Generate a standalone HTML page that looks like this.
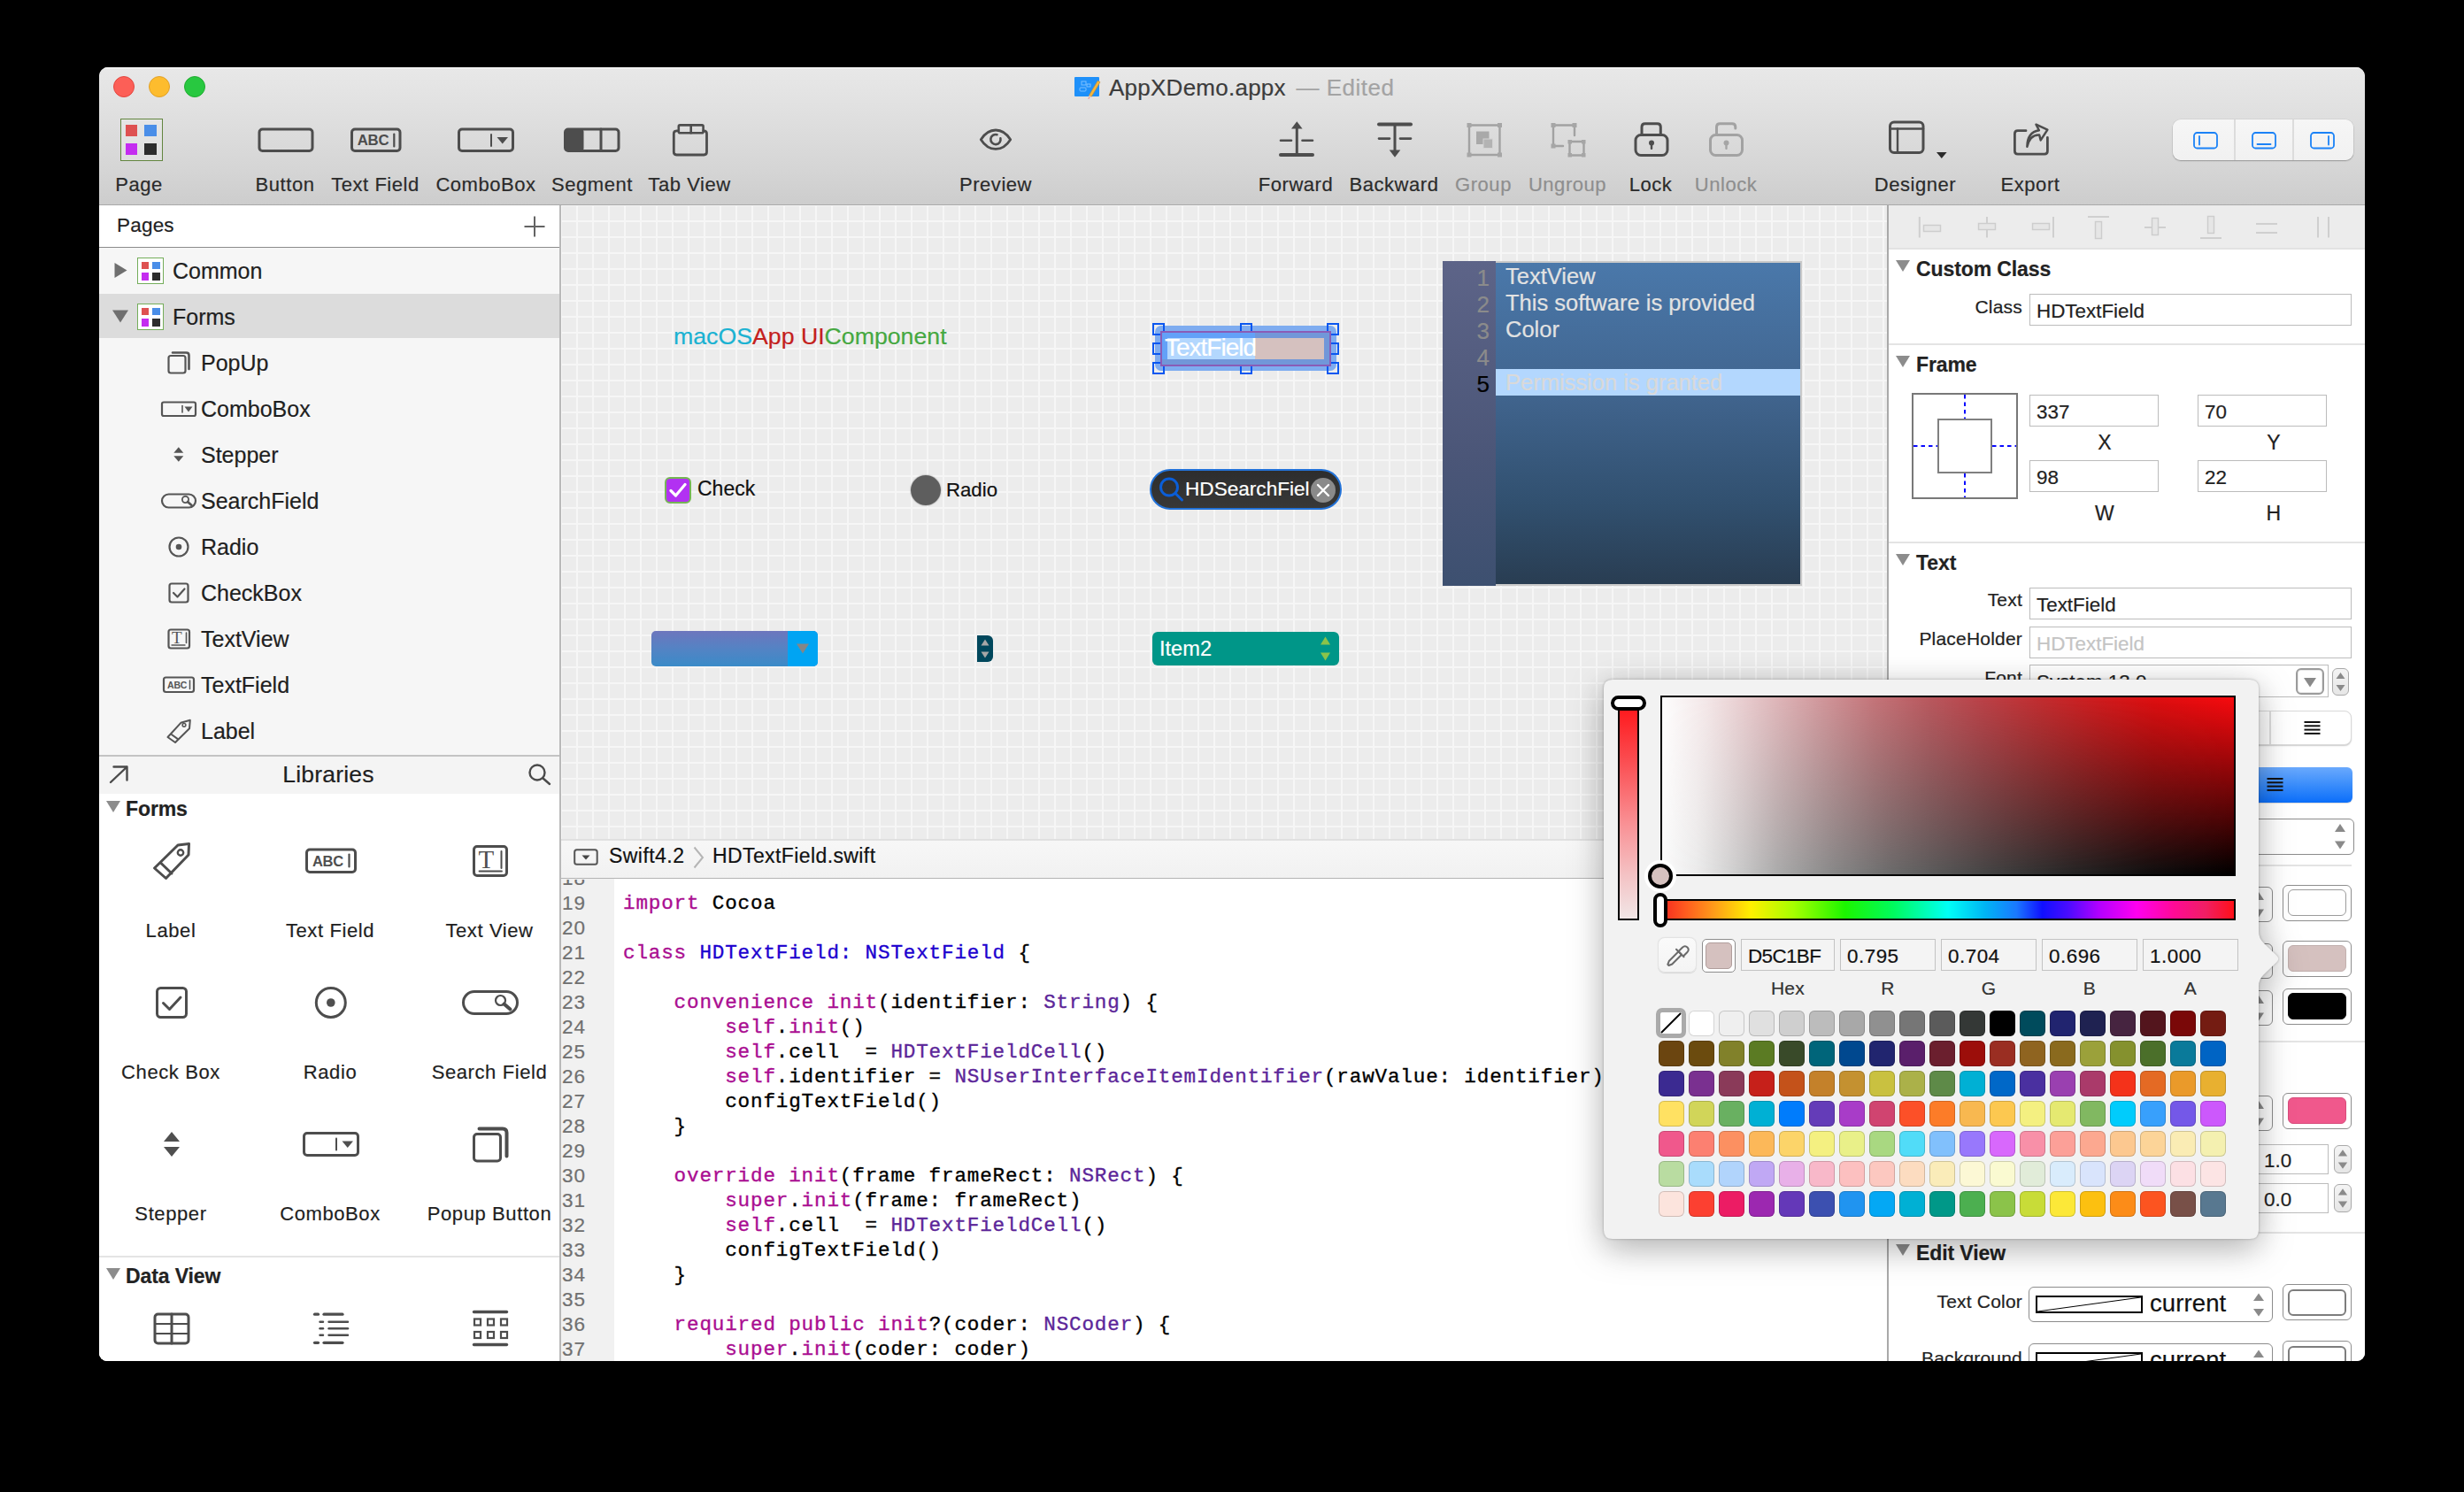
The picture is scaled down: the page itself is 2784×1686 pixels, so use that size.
<!DOCTYPE html>
<html><head><meta charset="utf-8"><title>AppXDemo</title>
<style>
html,body{margin:0;padding:0;background:#000;}
body{width:2784px;height:1686px;position:relative;overflow:hidden;font-family:"Liberation Sans",sans-serif;color:#222;}
*{box-sizing:border-box;}
#win{position:absolute;left:112px;top:76px;width:2560px;height:1462px;border-radius:10px 10px 9px 9px;overflow:hidden;background:#fff;}
#pg{position:absolute;left:-112px;top:-76px;width:2784px;height:1686px;}
.a{position:absolute;}
.t{position:absolute;white-space:nowrap;line-height:1;-webkit-text-stroke:0.200px;}
svg{position:absolute;overflow:visible;}
/* toolbar */
#tb{left:112px;top:76px;width:2560px;height:156px;background:linear-gradient(#e8e8e8 0%,#e2e2e2 25%,#d5d5d5 75%,#cdcdcd 100%);border-bottom:1.5px solid #a9a9a9;box-shadow:inset 0 1.500px 0 #f3f3f3;}
.tl{font-size:22px;color:#2b2b2b;transform:translateX(-50%);top:198px;letter-spacing:0.550px;}
.tl.d{color:#8e8e8e;}
.ic{stroke:#4d4d4d;fill:none;stroke-width:3;stroke-linecap:round;stroke-linejoin:round;}
.icd{stroke:#a2a2a2;fill:none;stroke-width:3;stroke-linecap:round;stroke-linejoin:round;}
/* sidebar */
#sb{left:112px;top:232px;width:520px;height:1306px;background:#f6f6f6;}
#sbr{left:632px;top:232px;width:2px;height:1306px;background:#b9b9b9;}
.row{font-size:25px;color:#1f1f1f;letter-spacing:0px;}
.pgi{width:30px;height:30px;border:1.5px solid #74ad5a;background:#fff;}
.pgi i{position:absolute;width:8.500px;height:8.500px;}
.lib{font-size:22px;color:#1f1f1f;transform:translateX(-50%);letter-spacing:0.6px;}
.sic{stroke:#555;fill:none;stroke-width:2.2;stroke-linecap:round;stroke-linejoin:round;}
.hdr{font-size:23px;font-weight:bold;color:#222;letter-spacing:-0.1px;}
/* canvas */
#cv{left:634px;top:232px;width:1499px;height:716px;background-color:#ececec;
background-image:linear-gradient(#f6f6f6 2px,transparent 2px),linear-gradient(90deg,#f6f6f6 2px,transparent 2px);background-size:18px 18px;background-position:-1px 17px;}
/* editor */
#edh{left:634px;top:948px;width:1499px;height:45px;background:linear-gradient(#f7f7f7,#f1f1f1);border-top:2px solid #e0e0e0;border-bottom:1.500px solid #b4b4b4;}
#ed{left:634px;top:993px;width:1499px;height:545px;background:#fff;}
#gut{left:634px;top:993px;width:60px;height:545px;background:#f1f1f1;}
.ln{font-size:22.500px;color:#707070;letter-spacing:1px;}
.cl{font-family:"Liberation Mono",monospace;font-size:22.600px;letter-spacing:0.840px;color:#000;white-space:pre;-webkit-text-stroke:0.350px;}
.k{color:#aa0d91;}.b{color:#1c00cf;}.p{color:#5c2699;}
/* inspector */
#insl{left:2132px;top:232px;width:2px;height:1306px;background:#a9a9a9;}
#ins{left:2134px;top:232px;width:538px;height:1306px;background:#fff;}
#insb{left:2134px;top:232px;width:538px;height:49px;background:#ececec;}
.fl{font-size:21px;color:#222;letter-spacing:0.2px;}
.fld{border:1.500px solid #bcbcbc;background:#fff;}
.fv{font-size:22.400px;color:#222;letter-spacing:0px;}
.dv{height:2px;background:#e4e4e4;}
.tri{width:0;height:0;border-left:8px solid transparent;border-right:8px solid transparent;border-top:13.500px solid #8c8c8c;}
.well{border:1.5px solid #8e8e8e;border-radius:6px;background:#fff;}
.welli{border:1.5px solid #9a9a9a;border-radius:6px;}
</style></head><body>
<div id="win"><div id="pg">
<div class="a" id="tb"></div>
<div class="a" id="sb"></div>
<div class="a" id="cv"></div>
<div class="a" id="edh"></div>
<div class="a" id="ed"></div>
<div class="a" id="gut"></div>
<div class="a" id="ins"></div>
<div class="a" id="insb"></div>
<div class="a" id="sbr"></div>
<div class="a" id="insl"></div>
<!-- traffic lights -->
<div class="a" style="left:128px;top:86px;width:24px;height:24px;border-radius:50%;background:#fc5f57;border:1px solid #e2463f;"></div>
<div class="a" style="left:168px;top:86px;width:24px;height:24px;border-radius:50%;background:#fdbc2e;border:1px solid #e0a028;"></div>
<div class="a" style="left:208px;top:86px;width:24px;height:24px;border-radius:50%;background:#28c840;border:1px solid #1fab2f;"></div>
<!-- title -->
<div class="a" style="left:1214px;top:87px;width:28px;height:22px;background:#1e90f9;border-radius:1px;"></div>
<svg style="left:1214px;top:84px" width="32" height="28" viewBox="0 0 32 28"><path d="M26.300 7.200 L29 8.800 L19.200 25.300 L16.500 23.700 Z" fill="#f6b73c" stroke="#c98a2a" stroke-width="0.6"/><path d="M16.500 23.700 L19.200 25.300 L15.600 28 Z" fill="#f3c9b0"/><path d="M16 26.200 L17 26.800 L15.600 28 Z" fill="#e05a6a"/><rect x="8" y="8" width="5" height="4" fill="none" stroke="#7cc0ff" stroke-width="1"/><rect x="6" y="15" width="7" height="4" rx="1" fill="none" stroke="#7cc0ff" stroke-width="1"/><rect x="14" y="11" width="4" height="3" fill="none" stroke="#7cc0ff" stroke-width="1"/></svg>
<div class="t" style="left:1253px;top:86px;font-size:26px;color:#3c3c3c;letter-spacing:0.25px;">AppXDemo.appx<span style="color:#a3a3a3;letter-spacing:0.5px;margin-left:4px;"> — Edited</span></div>
<!-- labels -->
<div class="t tl" style="left:157px;">Page</div>
<div class="t tl" style="left:322px;">Button</div>
<div class="t tl" style="left:424px;">Text Field</div>
<div class="t tl" style="left:549px;">ComboBox</div>
<div class="t tl" style="left:669px;">Segment</div>
<div class="t tl" style="left:779px;">Tab View</div>
<div class="t tl" style="left:1125px;">Preview</div>
<div class="t tl" style="left:1464px;">Forward</div>
<div class="t tl" style="left:1575px;">Backward</div>
<div class="t tl d" style="left:1676px;">Group</div>
<div class="t tl d" style="left:1771px;">Ungroup</div>
<div class="t tl" style="left:1865px;">Lock</div>
<div class="t tl d" style="left:1950px;">Unlock</div>
<div class="t tl" style="left:2164px;">Designer</div>
<div class="t tl" style="left:2294px;">Export</div>
<!-- page icon -->
<div class="a" style="left:136px;top:134px;width:48px;height:48px;border:1.5px solid #62853f;background:rgba(255,255,255,0.22);"></div>
<div class="a" style="left:142px;top:141px;width:13px;height:13px;background:#de5151;"></div>
<div class="a" style="left:163px;top:141px;width:14px;height:13px;background:#4a8ee8;"></div>
<div class="a" style="left:142px;top:162px;width:13px;height:13px;background:#c42df0;"></div>
<div class="a" style="left:163px;top:162px;width:14px;height:13px;background:#2d2d2d;"></div>
<!-- icons -->
<svg style="left:0;top:0" width="2784" height="240" viewBox="0 0 2784 240">
<g class="ic">
<rect x="293" y="146" width="60" height="24.5" rx="3.500"/>
<rect x="397.5" y="146" width="54.5" height="24.5" rx="3.500"/>
<line x1="445.300" y1="151.500" x2="445.300" y2="165.500" stroke-width="2.200"/>
<rect x="518.5" y="146" width="61" height="24.5" rx="3.500"/>
<line x1="555" y1="152" x2="555" y2="165" stroke-width="2"/>
<rect x="638.5" y="146" width="60.5" height="24.5" rx="3.500"/>
<line x1="679" y1="146" x2="679" y2="170"/>
<path d="M766.500 147.800 H764.500 Q761.300 147.800 761.300 151 V171.800 Q761.300 175 764.500 175 H795.300 Q798.500 175 798.500 171.800 V151 Q798.500 147.800 795.300 147.800 H794.800" stroke-width="2.800"/>
<rect x="766.800" y="141.400" width="27.800" height="8.900" rx="1.500" stroke-width="2.600"/><line x1="780.700" y1="141.400" x2="780.700" y2="150.300" stroke-width="2.600"/>
<!-- preview eye -->
<path d="M1108.300 157.700 C1113.500 149.500 1119.500 147 1125 147 C1130.500 147 1136.500 149.500 1141.700 157.700 C1136.500 165.900 1130.500 168.400 1125 168.400 C1119.500 168.400 1113.500 165.900 1108.300 157.700 Z" stroke-width="2.800"/>
<path d="M1126.500 152.200 A5.600 5.600 0 1 0 1130.400 156.300" stroke-width="2.600"/>
<!-- forward -->
<line x1="1465.300" y1="145" x2="1465.300" y2="174" />
<line x1="1447" y1="158.800" x2="1459" y2="158.800" stroke-width="2.6"/>
<line x1="1471.500" y1="158.800" x2="1483" y2="158.800" stroke-width="2.6"/>
<line x1="1447" y1="175" x2="1483" y2="175" stroke-width="4"/>
<!-- backward -->
<line x1="1576" y1="141" x2="1576" y2="170" />
<line x1="1558" y1="140.500" x2="1594" y2="140.500" stroke-width="4"/>
<line x1="1558" y1="156.600" x2="1570" y2="156.600" stroke-width="2.6"/>
<line x1="1582" y1="156.600" x2="1594" y2="156.600" stroke-width="2.6"/>
<!-- lock -->
<rect x="1848" y="152.500" width="36" height="23" rx="6"/>
<path d="M1855 152.500 V143.500 Q1855 139.800 1858.800 139.800 H1872.500 Q1876.300 139.800 1876.300 143.500 V152.500"/>
<!-- designer -->
<rect x="2135.500" y="138" width="37.500" height="34.500" rx="4.500"/>
<line x1="2135.500" y1="145.500" x2="2173" y2="145.500" stroke-width="2.4"/>
<line x1="2144" y1="145.500" x2="2144" y2="172.500" stroke-width="2.4"/>
<!-- export -->
<path d="M2289 147.700 H2279.800 Q2276.400 147.700 2276.400 151.100 V170.800 Q2276.400 174.200 2279.800 174.200 H2310 Q2313.400 174.200 2313.400 170.800 V155.500" stroke-width="2.800"/>
<path d="M2290.400 165.700 C2290.500 156 2294 148.800 2303.900 147.300 L2300.500 140.700 L2313.400 146.600 L2305.700 158.400 L2304.200 152.500 C2297 152 2292.500 157 2290.400 165.700 Z" stroke-width="2.500"/>
</g>
<g fill="#4d4d4d">
<rect x="638.500" y="146" width="21" height="24.500" rx="3"/>
<path d="M561.500 155 H574 L567.750 162.500 Z"/>
<path d="M1459 145.500 L1465.300 137.300 L1471.600 145.500 Z"/>
<path d="M1569.700 169.500 L1576 177.700 L1582.300 169.500 Z"/>
<circle cx="1866" cy="161.500" r="3"/><rect x="1864.800" y="161.500" width="2.400" height="7.500" rx="1"/>
<path d="M2188 172 H2199.600 L2193.800 179 Z" fill="#2b2b2b"/>
</g>
<text x="403.800" y="164.300" font-family="Liberation Sans" font-weight="bold" font-size="16.800" fill="#4d4d4d" letter-spacing="-0.3">ABC</text>
<g class="icd">
<!-- group -->
<rect x="1660" y="141.500" width="34.500" height="33.500" stroke-width="2.4"/>
<!-- ungroup -->
<path d="M1779 141.500 H1755 V165 H1766" stroke-width="2.4"/><path d="M1779 141.500 V153" stroke-width="2.4"/>
<rect x="1773.500" y="160" width="16" height="15.500" stroke-width="2.4" />
<!-- unlock -->
<rect x="1932.500" y="152.500" width="36" height="23" rx="6"/>
<path d="M1939.500 152.500 V143.500 Q1939.500 139.800 1943.300 139.800 H1957 Q1960.800 139.800 1960.800 143.500 V145"/>
</g>
<g fill="#a6a6a6">
<rect x="1657.500" y="139" width="5" height="5"/><rect x="1692" y="139" width="5" height="5"/><rect x="1657.500" y="172.500" width="5" height="5"/><rect x="1692" y="172.500" width="5" height="5"/>
<rect x="1668" y="148.500" width="14.500" height="14.500" fill="#a9a9a9"/><rect x="1676" y="157" width="10.500" height="10.500" fill="#b3b3b3" stroke="#d4d4d4" stroke-width="1"/>
<rect x="1752.500" y="139" width="5" height="5"/><rect x="1776.500" y="139" width="5" height="5"/><rect x="1752.500" y="162.500" width="5" height="5"/>
<rect x="1771.500" y="158" width="4.500" height="4.500"/><rect x="1787" y="158" width="4.500" height="4.500"/><rect x="1771.500" y="173" width="4.500" height="4.500"/><rect x="1787" y="173" width="4.500" height="4.500"/>
<circle cx="1950.500" cy="161.500" r="3"/><rect x="1949.300" y="161.500" width="2.400" height="7.500" rx="1"/>
</g>
</svg>
<!-- segmented -->
<div class="a" style="left:2455px;top:135px;width:204px;height:46px;border-radius:9px;background:linear-gradient(#f6f6f6,#f1f1f1);box-shadow:0 1px 1.5px rgba(0,0,0,0.28),0 0 0 0.5px rgba(0,0,0,0.08);"></div>
<div class="a" style="left:2524px;top:135px;width:2px;height:46px;background:#dcdcdc;"></div>
<div class="a" style="left:2590px;top:135px;width:2px;height:46px;background:#dcdcdc;"></div>
<svg style="left:0;top:0" width="2784" height="240" viewBox="0 0 2784 240"><g fill="none" stroke="#1a82f7" stroke-width="1.800" stroke-linecap="round">
<rect x="2479" y="150" width="26" height="17.500" rx="3.500"/><line x1="2485" y1="154" x2="2485" y2="163.500"/>
<rect x="2545" y="150" width="26" height="17.500" rx="3.500"/><line x1="2550.500" y1="163" x2="2565.500" y2="163"/>
<rect x="2611" y="150" width="26" height="17.500" rx="3.500"/><line x1="2631" y1="154" x2="2631" y2="163.500"/>
</g></svg>
<div class="a" style="left:112px;top:232px;width:520px;height:48px;background:#fff;border-bottom:1.5px solid #8b8b8b;"></div>
<div class="t" style="left:132px;top:244px;font-size:22.500px;color:#1f1f1f;letter-spacing:0.200px;">Pages</div>
<svg style="left:591px;top:243px" width="26" height="26" viewBox="0 0 26 26"><path d="M13 1.5V24.5M1.500 13H24.500" stroke="#636363" stroke-width="2" fill="none"/></svg>
<div class="a" style="left:112px;top:332px;width:520px;height:50px;background:#dcdcdc;"></div>
<div class="a pgi" style="left:155px;top:291px;"><i style="left:3.500px;top:3.500px;background:#de5151;"></i><i style="left:16px;top:3.500px;background:#4a8ee8;"></i><i style="left:3.500px;top:16px;background:#c42df0;"></i><i style="left:16px;top:16px;background:#2d2d2d;"></i></div>
<div class="a pgi" style="left:155px;top:343px;"><i style="left:3.500px;top:3.500px;background:#de5151;"></i><i style="left:16px;top:3.500px;background:#4a8ee8;"></i><i style="left:3.500px;top:16px;background:#c42df0;"></i><i style="left:16px;top:16px;background:#2d2d2d;"></i></div>
<svg style="left:0;top:0" width="700" height="900" viewBox="0 0 700 900"><path d="M129.500 297 L143.500 305.500 L129.500 314 Z" fill="#6f6f6f"/><path d="M127 350.500 H145 L136 364.500 Z" fill="#6f6f6f"/></svg>
<div class="t row" style="left:195px;top:294px;">Common</div>
<div class="t row" style="left:195px;top:346px;">Forms</div>
<div class="t row" style="left:227px;top:398px;">PopUp</div>
<div class="t row" style="left:227px;top:450px;">ComboBox</div>
<div class="t row" style="left:227px;top:502px;">Stepper</div>
<div class="t row" style="left:227px;top:554px;">SearchField</div>
<div class="t row" style="left:227px;top:606px;">Radio</div>
<div class="t row" style="left:227px;top:658px;">CheckBox</div>
<div class="t row" style="left:227px;top:710px;">TextView</div>
<div class="t row" style="left:227px;top:762px;">TextField</div>
<div class="t row" style="left:227px;top:814px;">Label</div>
<svg style="left:0;top:0" width="700" height="900" viewBox="0 0 700 900"><g class="sic">
<!-- popup -->
<rect x="190.500" y="402" width="19" height="19.500" rx="2.500"/><path d="M195 398.500 H210.500 Q213.500 398.500 213.500 401.500 V417" stroke-width="2.600"/>
<!-- combobox -->
<rect x="183" y="454.500" width="38" height="15.500" rx="2"/><line x1="206" y1="458.500" x2="206" y2="466" stroke-width="1.600"/>
<!-- searchfield -->
<rect x="183" y="558.500" width="38" height="15" rx="7.500"/><circle cx="209.500" cy="564.500" r="3.600" stroke-width="1.800"/><line x1="212" y1="567" x2="216.500" y2="571" stroke-width="2.600"/>
<!-- radio -->
<circle cx="202" cy="618" r="10.500"/>
<!-- checkbox -->
<rect x="191.500" y="659.500" width="21" height="21" rx="2.500"/><path d="M196 670 L200.500 674.500 L208.500 665.500" stroke-width="2.200"/>
<!-- textview -->
<rect x="190.500" y="711.500" width="23.500" height="21" rx="2.500"/><line x1="210.500" y1="715" x2="210.500" y2="726.500" stroke-width="1.600"/><line x1="194" y1="729" x2="209" y2="729" stroke-width="1.400"/>
<!-- textfield -->
<rect x="185" y="765.500" width="34" height="16.500" rx="2.500"/><line x1="214.500" y1="769" x2="214.500" y2="778.500" stroke-width="1.500"/>
<!-- label tag -->
<path d="M189.500 833 L204.300 816.800 L214.800 813.800 L214 823.300 L198 839 Z M192.800 829.300 L201.600 835.600" stroke-width="2"/><circle cx="208" cy="819.300" r="1.900" stroke-width="1.500"/>
</g>
<g fill="#555">
<path d="M208.500 459.500 H217.500 L213 465.500 Z"/>
<path d="M196.300 511.800 H207.300 L201.800 505.300 Z"/><path d="M196.300 515.300 H207.300 L201.800 521.800 Z"/>
<circle cx="202" cy="618" r="3.300"/>
</g>
<text x="194" y="727" font-family="Liberation Serif" font-size="19" fill="#555">T</text>
<text x="189" y="778" font-family="Liberation Sans" font-weight="bold" font-size="10.500" fill="#555" letter-spacing="-0.2">ABC</text>
</svg>
<div class="a" style="left:112px;top:853px;width:520px;height:2px;background:#c3c3c3;"></div>
<div class="a" style="left:112px;top:855px;width:520px;height:42px;background:#f4f4f4;"></div>
<div class="a" style="left:112px;top:897px;width:520px;height:641px;background:#fff;"></div>
<div class="t" style="left:371px;top:862px;font-size:26.5px;color:#1f1f1f;transform:translateX(-50%);letter-spacing:0.2px;">Libraries</div>
<svg style="left:0;top:0" width="700" height="1000" viewBox="0 0 700 1000"><g fill="none" stroke="#4a4a4a" stroke-width="2.400" stroke-linecap="round" stroke-linejoin="round"><path d="M125 884 L143.500 866.500 M128.500 866.500 H143.500 V881.500"/><circle cx="607" cy="873" r="8.500"/><line x1="613.500" y1="879.500" x2="621" y2="886"/></g></svg>
<div class="a tri" style="left:120px;top:905px;border-left-width:8.500px;border-right-width:8.500px;border-top-width:13px;"></div>
<div class="t hdr" style="left:142px;top:903px;">Forms</div>
<div class="t lib" style="left:193px;top:1041px;">Label</div>
<div class="t lib" style="left:373px;top:1041px;">Text Field</div>
<div class="t lib" style="left:553px;top:1041px;">Text View</div>
<div class="t lib" style="left:193px;top:1201px;">Check Box</div>
<div class="t lib" style="left:373px;top:1201px;">Radio</div>
<div class="t lib" style="left:553px;top:1201px;">Search Field</div>
<div class="t lib" style="left:193px;top:1361px;">Stepper</div>
<div class="t lib" style="left:373px;top:1361px;">ComboBox</div>
<div class="t lib" style="left:553px;top:1361px;">Popup Button</div>
<svg style="left:0;top:0" width="700" height="1600" viewBox="0 0 700 1600"><g class="ic" stroke="#4f4f4f" stroke-width="2.800">
<!-- label tag big -->
<path d="M174.500 981 L201 955 L213.500 953.500 L213 966 L187.500 992.500 Z M181 974.500 L194 987" />
<circle cx="204" cy="963.500" r="3.200" stroke-width="2.400"/>
<!-- text field big -->
<rect x="346.500" y="960" width="55" height="25.500" rx="3.500"/><line x1="394.500" y1="965.500" x2="394.500" y2="979.500" stroke-width="2.200"/>
<!-- text view big -->
<rect x="535.500" y="956.500" width="37" height="33" rx="3.500"/><line x1="566.500" y1="962" x2="566.500" y2="981" stroke-width="2"/><line x1="541.500" y1="984.500" x2="567" y2="984.500" stroke-width="1.800"/>
<!-- checkbox big -->
<rect x="177.500" y="1116.500" width="33" height="33" rx="4"/><path d="M184.500 1133.500 L191.500 1140.500 L204 1127" stroke-width="3"/>
<!-- radio big -->
<circle cx="373.800" cy="1133" r="16.500"/>
<!-- search big -->
<rect x="523.500" y="1120.500" width="61" height="25" rx="12.500"/><circle cx="565.500" cy="1130.500" r="5.500" stroke-width="2.200"/><line x1="569.500" y1="1134.500" x2="576.500" y2="1140.500" stroke-width="4"/>
<!-- combobox big -->
<rect x="343.500" y="1280.500" width="61" height="25" rx="3.500"/><line x1="380" y1="1286.500" x2="380" y2="1299.500" stroke-width="2"/>
<!-- popup big -->
<rect x="535.500" y="1281.500" width="30" height="30.500" rx="3.500"/><path d="M541.500 1275.500 H568 Q572.500 1275.500 572.500 1280 V1306.500" stroke-width="4"/>
</g>
<g fill="#4f4f4f">
<circle cx="373.800" cy="1133" r="4.800"/>
<path d="M185 1290 H203 L194 1279 Z"/><path d="M185 1296 H203 L194 1307 Z"/>
<path d="M386.500 1289.500 H399 L392.750 1297 Z"/>
</g>
<text x="353" y="979" font-family="Liberation Sans" font-weight="bold" font-size="16.500" fill="#4f4f4f" letter-spacing="-0.3">ABC</text>
<text x="540.500" y="981" font-family="Liberation Serif" font-size="29" fill="#4f4f4f">T</text>
</svg>
<div class="a dv" style="left:112px;top:1419px;width:520px;"></div>
<div class="a tri" style="left:120px;top:1433px;border-left-width:8.500px;border-right-width:8.500px;border-top-width:13px;"></div>
<div class="t hdr" style="left:142px;top:1431px;">Data View</div>
<svg style="left:0;top:0" width="700" height="1600" viewBox="0 0 700 1600"><g class="ic" stroke="#4f4f4f" stroke-width="2.800">
<rect x="175" y="1485" width="38" height="33" rx="3.500"/><line x1="194" y1="1485" x2="194" y2="1518"/><line x1="175" y1="1496" x2="213" y2="1496" stroke-width="2.200"/><line x1="175" y1="1507" x2="213" y2="1507" stroke-width="2.200"/>
<g stroke-width="3.200"><line x1="366" y1="1485.200" x2="387" y2="1485.200"/><line x1="355.500" y1="1485.200" x2="359.500" y2="1485.200"/>
<line x1="371.500" y1="1493.700" x2="393" y2="1493.700" stroke-width="2.400"/><line x1="361.500" y1="1493.700" x2="365" y2="1493.700" stroke-width="2.400"/>
<line x1="371.500" y1="1501.200" x2="393" y2="1501.200" stroke-width="2.400"/><line x1="361.500" y1="1501.200" x2="365" y2="1501.200" stroke-width="2.400"/>
<line x1="371.500" y1="1508.800" x2="393" y2="1508.800" stroke-width="2.400"/><line x1="361.500" y1="1508.800" x2="365" y2="1508.800" stroke-width="2.400"/>
<line x1="366" y1="1517.300" x2="387" y2="1517.300"/><line x1="355.500" y1="1517.300" x2="359.500" y2="1517.300"/></g>
<line x1="535.500" y1="1482.500" x2="572.500" y2="1482.500" stroke-width="3.400"/><line x1="535.500" y1="1519.500" x2="572.500" y2="1519.500" stroke-width="3.400"/>
<g stroke-width="2.200" stroke-linejoin="miter"><rect x="536" y="1490.500" width="7" height="7"/><rect x="551" y="1490.500" width="7" height="7"/><rect x="566" y="1490.500" width="7" height="7"/><rect x="536" y="1505" width="7" height="7"/><rect x="551" y="1505" width="7" height="7"/><rect x="566" y="1505" width="7" height="7"/></g>
</g></svg>
<!-- label -->
<div class="t" style="left:761px;top:367px;font-size:26.7px;letter-spacing:0px;"><span style="color:#1ab2d2;">macOS</span><span style="color:#c4201c;">App UI</span><span style="color:#45a841;">Component</span></div>
<!-- selected textfield -->
<div class="a" style="left:1305px;top:368px;width:205px;height:51px;border-radius:7px;background:#7eacf0;"></div>
<svg style="left:0;top:0" width="2784" height="500" viewBox="0 0 2784 500"><g fill="none" stroke="#0a57f0" stroke-width="2">
<rect x="1303" y="366" width="12" height="12"/><rect x="1402" y="366" width="12" height="12"/><rect x="1500" y="366" width="12" height="12"/>
<rect x="1303" y="388" width="12" height="12"/><rect x="1500" y="388" width="12" height="12"/>
<rect x="1303" y="410" width="12" height="12"/><rect x="1402" y="410" width="12" height="12"/><rect x="1500" y="410" width="12" height="12"/>
</g></svg>
<div class="a" style="left:1311px;top:374px;width:193px;height:40px;background:#7197d9;border:2px solid #8a5cb6;"></div>
<div class="a" style="left:1313px;top:376px;width:105px;height:6px;background:#63a1f8;"></div>
<div class="a" style="left:1313px;top:376px;width:6px;height:30px;background:#63a1f8;"></div>
<div class="a" style="left:1319px;top:382px;width:99px;height:24px;background:#b3d7fe;"></div>
<div class="a" style="left:1418px;top:382px;width:78px;height:24px;background:#d5c1bf;"></div>
<div class="t" style="left:1316px;top:379px;font-size:28px;color:#fff;letter-spacing:-1px;">TextField</div>
<!-- check -->
<div class="a" style="left:751px;top:539px;width:30px;height:30px;border-radius:6px;background:#b231f2;border:2px solid #76b655;"></div>
<svg style="left:751px;top:539px" width="30" height="30" viewBox="0 0 30 30"><path d="M7 15.500 L12.500 21 L23 8.500" fill="none" stroke="#fff" stroke-width="3.200" stroke-linecap="round" stroke-linejoin="round"/></svg>
<div class="t" style="left:788px;top:541px;font-size:23px;color:#111;letter-spacing:0px;">Check</div>
<!-- radio -->
<div class="a" style="left:1029px;top:537px;width:34px;height:34px;border-radius:50%;background:radial-gradient(circle,#5e5e5e 0%,#5e5e5e 82%,#7d7d7d 100%);box-shadow:0 0 1.5px #666;"></div>
<div class="t" style="left:1069px;top:543px;font-size:22.200px;color:#111;letter-spacing:0px;">Radio</div>
<!-- search field -->
<div class="a" style="left:1299px;top:530px;width:217px;height:46px;border-radius:23px;background:linear-gradient(#2d2d2d,#383838);border:2px solid #2272d8;"></div>
<svg style="left:1300px;top:530px" width="50" height="46" viewBox="0 0 50 46"><circle cx="21" cy="20.500" r="9.500" fill="none" stroke="#0b5ed7" stroke-width="3"/><line x1="28" y1="27.500" x2="35.500" y2="35" stroke="#0b5ed7" stroke-width="3" stroke-linecap="round"/></svg>
<div class="t" style="left:1339px;top:542px;font-size:22.600px;color:#fff;letter-spacing:0px;">HDSearchFiel</div>
<div class="a" style="left:1481px;top:540px;width:28px;height:28px;border-radius:50%;background:#8a8a8a;"></div>
<svg style="left:1481px;top:540px" width="28" height="28" viewBox="0 0 28 28"><path d="M8 8 L20 20 M20 8 L8 20" stroke="#fff" stroke-width="2.400" stroke-linecap="round"/></svg>
<!-- combobox -->
<div class="a" style="left:736px;top:713px;width:188px;height:40px;border-radius:5px;background:linear-gradient(#6d76bd,#5483c4 50%,#3a8bc8);overflow:hidden;"><div class="a" style="left:154px;top:0;width:34px;height:40px;background:#00a4f3;"></div></div>
<svg style="left:890px;top:713px" width="34" height="40" viewBox="0 0 34 40"><path d="M10 14.500 H24 L17 25.500 Z" fill="#858585"/></svg>
<!-- stepper -->
<div class="a" style="left:1104px;top:718px;width:18px;height:30px;border-radius:0 6px 6px 0;background:#00475c;"></div>
<svg style="left:1104px;top:718px" width="18" height="30" viewBox="0 0 18 30"><path d="M4.500 11.500 H13.500 L9 4.500 Z" fill="#a6a6a6"/><path d="M4.500 18.500 H13.500 L9 25.500 Z" fill="#a6a6a6"/></svg>
<!-- popup -->
<div class="a" style="left:1302px;top:714px;width:211px;height:38px;border-radius:6px;background:#009688;"></div>
<div class="t" style="left:1310px;top:722px;font-size:23.600px;color:#fff;">Item2</div>
<svg style="left:1485px;top:714px" width="26" height="38" viewBox="0 0 26 38"><path d="M7 14.500 H18 L12.500 5.500 Z" fill="#8bc34a"/><path d="M7 23.500 H18 L12.500 32.500 Z" fill="#8bc34a"/></svg>
<!-- textview -->
<div class="a" style="left:1630px;top:295px;width:406px;height:367px;background:linear-gradient(#4a78aa,#41658f 40%,#31506f 75%,#293d52);border:2px solid #c9c9c9;border-left:none;"></div>
<div class="a" style="left:1630px;top:295px;width:60px;height:367px;background:linear-gradient(#5d6488,#4b5678 60%,#3d5070);"></div>
<div class="a" style="left:1690px;top:417px;width:344px;height:30px;background:#b3d7fe;"></div>
<div class="t" style="left:1630px;width:53px;text-align:right;top:299px;font-size:26px;color:#8b8b8b;line-height:30px;white-space:pre;">1
2
3
4
<span style="color:#000;">5</span></div>
<div class="t" style="left:1701px;top:297px;font-size:25.500px;color:#e2e2e2;line-height:30px;white-space:pre;">TextView
This software is provided
Color

<span style="color:#d9d9d9;">Permission is granted</span></div>
<svg style="left:648px;top:959px" width="30" height="20" viewBox="0 0 30 20"><rect x="1.200" y="1.200" width="25.500" height="16.500" rx="2.500" fill="none" stroke="#555" stroke-width="2"/><path d="M9.500 7.500 H18.500 L14 12.500 Z" fill="#444"/></svg>
<div class="t" style="left:688px;top:956px;font-size:23px;color:#111;letter-spacing:0.45px;">Swift4.2</div>
<svg style="left:780px;top:955px" width="20" height="28" viewBox="0 0 20 28"><path d="M4.500 2.500 L14 14 L4.500 25.500" fill="none" stroke="#b5b5b5" stroke-width="2"/></svg>
<div class="t" style="left:805px;top:956px;font-size:23px;color:#111;letter-spacing:0.4px;">HDTextField.swift</div>
<div class="a" style="left:634px;top:994px;width:1499px;height:544px;overflow:hidden;">
<div class="t ln" style="left:1px;top:-12px;">18</div>
<div class="t ln" style="left:1px;top:16px;">19</div>
<div class="t cl" style="left:70px;top:16px;"><span class="k">import</span> Cocoa</div>
<div class="t ln" style="left:1px;top:44px;">20</div>
<div class="t ln" style="left:1px;top:72px;">21</div>
<div class="t cl" style="left:70px;top:72px;"><span class="k">class</span> <span class="b">HDTextField: NSTextField</span> {</div>
<div class="t ln" style="left:1px;top:100px;">22</div>
<div class="t ln" style="left:1px;top:128px;">23</div>
<div class="t cl" style="left:70px;top:128px;">    <span class="k">convenience</span> <span class="k">init</span>(identifier: <span class="p">String</span>) {</div>
<div class="t ln" style="left:1px;top:156px;">24</div>
<div class="t cl" style="left:70px;top:156px;">        <span class="k">self</span>.<span class="k">init</span>()</div>
<div class="t ln" style="left:1px;top:184px;">25</div>
<div class="t cl" style="left:70px;top:184px;">        <span class="k">self</span>.cell  = <span class="p">HDTextFieldCell</span>()</div>
<div class="t ln" style="left:1px;top:212px;">26</div>
<div class="t cl" style="left:70px;top:212px;">        <span class="k">self</span>.identifier = <span class="p">NSUserInterfaceItemIdentifier</span>(rawValue: identifier)</div>
<div class="t ln" style="left:1px;top:240px;">27</div>
<div class="t cl" style="left:70px;top:240px;">        configTextField()</div>
<div class="t ln" style="left:1px;top:268px;">28</div>
<div class="t cl" style="left:70px;top:268px;">    }</div>
<div class="t ln" style="left:1px;top:296px;">29</div>
<div class="t ln" style="left:1px;top:324px;">30</div>
<div class="t cl" style="left:70px;top:324px;">    <span class="k">override</span> <span class="k">init</span>(frame frameRect: <span class="p">NSRect</span>) {</div>
<div class="t ln" style="left:1px;top:352px;">31</div>
<div class="t cl" style="left:70px;top:352px;">        <span class="k">super</span>.<span class="k">init</span>(frame: frameRect)</div>
<div class="t ln" style="left:1px;top:380px;">32</div>
<div class="t cl" style="left:70px;top:380px;">        <span class="k">self</span>.cell  = <span class="p">HDTextFieldCell</span>()</div>
<div class="t ln" style="left:1px;top:408px;">33</div>
<div class="t cl" style="left:70px;top:408px;">        configTextField()</div>
<div class="t ln" style="left:1px;top:436px;">34</div>
<div class="t cl" style="left:70px;top:436px;">    }</div>
<div class="t ln" style="left:1px;top:464px;">35</div>
<div class="t ln" style="left:1px;top:492px;">36</div>
<div class="t cl" style="left:70px;top:492px;">    <span class="k">required</span> <span class="k">public</span> <span class="k">init</span>?(coder: <span class="p">NSCoder</span>) {</div>
<div class="t ln" style="left:1px;top:520px;">37</div>
<div class="t cl" style="left:70px;top:520px;">        <span class="k">super</span>.<span class="k">init</span>(coder: coder)</div>
</div>
<svg style="left:0;top:0" width="2784" height="300" viewBox="0 0 2784 300"><g fill="#e6e6e6" stroke="#cdcdcd" stroke-width="1.500">
<rect x="2173.500" y="254.500" width="19" height="7"/><rect x="2235.500" y="252.500" width="19" height="7"/><rect x="2296.500" y="252.500" width="19" height="7"/>
<rect x="2367.500" y="250.500" width="7" height="19"/><rect x="2431.500" y="246.500" width="7" height="19"/><rect x="2494.500" y="244.500" width="7" height="19"/></g>
<g stroke="#cfcfcf" stroke-width="2" fill="none">
<line x1="2168.800" y1="245" x2="2168.800" y2="268.500"/>
<line x1="2245" y1="245" x2="2245" y2="252"/><line x1="2245" y1="260" x2="2245" y2="268.500"/>
<line x1="2320" y1="245" x2="2320" y2="268.500"/>
<line x1="2359" y1="245" x2="2383" y2="245"/>
<line x1="2423" y1="257" x2="2431" y2="257"/><line x1="2439" y1="257" x2="2447" y2="257"/>
<line x1="2486" y1="269" x2="2510" y2="269"/>
<line x1="2549" y1="253" x2="2573" y2="253"/><line x1="2549" y1="263" x2="2573" y2="263"/>
<line x1="2619" y1="245" x2="2619" y2="268.500"/><line x1="2631" y1="245" x2="2631" y2="268.500"/>
</g></svg>
<div class="a" style="left:2134px;top:280px;width:538px;height:1.500px;background:#e2e2e2;"></div>
<div class="a tri" style="left:2142px;top:294px;"></div>
<div class="t hdr" style="left:2165px;top:293px;">Custom Class</div>
<div class="t fl" style="left:2134px;width:151px;text-align:right;top:336px;">Class</div>
<div class="a fld" style="left:2293px;top:332px;width:364px;height:36px;"></div>
<div class="t fv" style="left:2301px;top:341px;color:#222;">HDTextField</div>
<div class="a dv" style="left:2134px;top:388px;width:538px;"></div>
<div class="a tri" style="left:2142px;top:402px;"></div>
<div class="t hdr" style="left:2165px;top:401px;">Frame</div>
<div class="a" style="left:2160px;top:444px;width:120px;height:120px;border:2px solid #787878;background:#fff;"></div>
<div class="a" style="left:2189px;top:473px;width:62px;height:62px;border:2px solid #808080;background:#fff;"></div>
<svg style="left:0;top:0" width="2784" height="600" viewBox="0 0 2784 600"><g stroke="#0a0aff" stroke-width="2" stroke-dasharray="4.500 4" fill="none"><line x1="2220" y1="446" x2="2220" y2="473"/><line x1="2220" y1="535" x2="2220" y2="562"/><line x1="2162" y1="504" x2="2189" y2="504"/><line x1="2251" y1="504" x2="2278" y2="504"/></g></svg>
<div class="a fld" style="left:2293px;top:446px;width:146px;height:36px;"></div>
<div class="t fv" style="left:2301px;top:455px;color:#222;">337</div>
<div class="a fld" style="left:2483px;top:446px;width:146px;height:36px;"></div>
<div class="t fv" style="left:2491px;top:455px;color:#222;">70</div>
<div class="a fld" style="left:2293px;top:520px;width:146px;height:36px;"></div>
<div class="t fv" style="left:2301px;top:529px;color:#222;">98</div>
<div class="a fld" style="left:2483px;top:520px;width:146px;height:36px;"></div>
<div class="t fv" style="left:2491px;top:529px;color:#222;">22</div>
<div class="t fl" style="left:2378px;top:489px;transform:translateX(-50%);font-size:23px;">X</div>
<div class="t fl" style="left:2569px;top:489px;transform:translateX(-50%);font-size:23px;">Y</div>
<div class="t fl" style="left:2378px;top:569px;transform:translateX(-50%);font-size:23px;">W</div>
<div class="t fl" style="left:2569px;top:569px;transform:translateX(-50%);font-size:23px;">H</div>
<div class="a dv" style="left:2134px;top:612px;width:538px;"></div>
<div class="a tri" style="left:2142px;top:626px;"></div>
<div class="t hdr" style="left:2165px;top:625px;">Text</div>
<div class="t fl" style="left:2134px;width:151px;text-align:right;top:667px;">Text</div>
<div class="a fld" style="left:2293px;top:664px;width:364px;height:36px;"></div>
<div class="t fv" style="left:2301px;top:673px;color:#222;">TextField</div>
<div class="t fl" style="left:2134px;width:151px;text-align:right;top:711px;">PlaceHolder</div>
<div class="a fld" style="left:2293px;top:708px;width:364px;height:36px;"></div>
<div class="t fv" style="left:2301px;top:717px;color:#c4c4c4;">HDTextField</div>
<div class="t fl" style="left:2134px;width:151px;text-align:right;top:755px;">Font</div>
<div class="a fld" style="left:2293px;top:751px;width:338px;height:37px;"></div>
<div class="t fv" style="left:2301px;top:760px;color:#222;">System  13.0</div>
<div class="a" style="left:2594px;top:755px;width:32px;height:30px;border:2.500px solid #9b9b9b;border-radius:6px;background:#fff;box-shadow:inset 0 0 0 1px #e8e8e8;"></div>
<svg style="left:2594px;top:755px" width="32" height="30" viewBox="0 0 32 30"><path d="M9 11 H23 L16 21.500 Z" fill="#8a8a8a"/></svg>
<div class="a" style="left:2635px;top:755px;width:19px;height:31px;border:1.500px solid #a9a9a9;border-radius:6px;background:linear-gradient(#f4f4f4,#e6e6e6);"></div>
<svg style="left:2635px;top:755px" width="19" height="31" viewBox="0 0 19 31"><path d="M4.500 12 H14.500 L9.500 5 Z" fill="#8a8a8a"/><path d="M4.500 19 H14.500 L9.500 26 Z" fill="#8a8a8a"/></svg>
<div class="a" style="left:2440px;top:803px;width:217px;height:39px;border-radius:8px;background:#fff;border:1px solid #d9d9d9;box-shadow:0 1px 1.500px rgba(0,0,0,0.2);"></div>
<div class="a" style="left:2564px;top:804px;width:1.500px;height:37px;background:#dedede;"></div>
<svg style="left:2602px;top:814px" width="22" height="18" viewBox="0 0 22 18"><g stroke="#111" stroke-width="2"><line x1="1.500" y1="2" x2="19.500" y2="2"/><line x1="1.500" y1="6.300" x2="19.500" y2="6.300"/><line x1="1.500" y1="10.600" x2="19.500" y2="10.600"/><line x1="1.500" y1="14.900" x2="19.500" y2="14.900"/></g></svg>
<div class="a" style="left:2440px;top:867px;width:218px;height:40px;border-radius:6px;background:linear-gradient(#6aa9fd,#3f90fb 45%,#0b6efa);box-shadow:0 1px 1px rgba(0,0,0,0.15);"></div>
<svg style="left:2560px;top:878px" width="22" height="18" viewBox="0 0 22 18"><g stroke="#111" stroke-width="2"><line x1="1.500" y1="2" x2="19.500" y2="2"/><line x1="1.500" y1="6.300" x2="19.500" y2="6.300"/><line x1="1.500" y1="10.600" x2="19.500" y2="10.600"/><line x1="1.500" y1="14.900" x2="19.500" y2="14.900"/></g></svg>
<div class="a" style="left:2440px;top:925px;width:220px;height:41px;border:1.500px solid #8c8c8c;border-radius:6px;background:#fff;"></div>
<svg style="left:2636px;top:929px" width="16" height="32" viewBox="0 0 16 32"><path d="M2 11 H14 L8 2 Z" fill="#8a8a8a"/><path d="M2 21.500 H14 L8 30.500 Z" fill="#8a8a8a"/></svg>
<div class="a dv" style="left:2134px;top:977px;width:523px;"></div>
<div class="a" style="left:2440px;top:1002px;width:128px;height:40px;border:1.500px solid #8c8c8c;border-radius:6px;background:#fff;"></div>
<svg style="left:2544px;top:1006px" width="16" height="32" viewBox="0 0 16 32"><path d="M2 11 H14 L8 2 Z" fill="#8a8a8a"/><path d="M2 21.500 H14 L8 30.500 Z" fill="#8a8a8a"/></svg>
<div class="a well" style="left:2579px;top:1000px;width:78px;height:41px;"></div>
<div class="a welli" style="left:2585px;top:1005px;width:66px;height:30px;background:#fff;border-color:#9c9c9c;"></div>
<div class="a" style="left:2440px;top:1066px;width:128px;height:40px;border:1.500px solid #8c8c8c;border-radius:6px;background:#fff;"></div>
<svg style="left:2544px;top:1070px" width="16" height="32" viewBox="0 0 16 32"><path d="M2 11 H14 L8 2 Z" fill="#8a8a8a"/><path d="M2 21.500 H14 L8 30.500 Z" fill="#8a8a8a"/></svg>
<div class="a well" style="left:2579px;top:1063px;width:78px;height:41px;"></div>
<div class="a welli" style="left:2585px;top:1068px;width:66px;height:30px;background:#d5c1bf;border-color:#c2b0ae;"></div>
<div class="a" style="left:2440px;top:1119px;width:128px;height:40px;border:1.500px solid #8c8c8c;border-radius:6px;background:#fff;"></div>
<svg style="left:2544px;top:1123px" width="16" height="32" viewBox="0 0 16 32"><path d="M2 11 H14 L8 2 Z" fill="#8a8a8a"/><path d="M2 21.500 H14 L8 30.500 Z" fill="#8a8a8a"/></svg>
<div class="a well" style="left:2579px;top:1117px;width:78px;height:41px;"></div>
<div class="a welli" style="left:2585px;top:1122px;width:66px;height:30px;background:#000;border-color:#000;"></div>
<div class="a dv" style="left:2134px;top:1176px;width:538px;"></div>
<div class="a" style="left:2440px;top:1238px;width:128px;height:40px;border:1.500px solid #8c8c8c;border-radius:6px;background:#fff;"></div>
<svg style="left:2544px;top:1242px" width="16" height="32" viewBox="0 0 16 32"><path d="M2 11 H14 L8 2 Z" fill="#8a8a8a"/><path d="M2 21.500 H14 L8 30.500 Z" fill="#8a8a8a"/></svg>
<div class="a well" style="left:2579px;top:1235px;width:78px;height:41px;"></div>
<div class="a welli" style="left:2585px;top:1240px;width:66px;height:30px;background:#f0588c;border-color:#d84c7c;"></div>
<div class="a fld" style="left:2440px;top:1293px;width:191px;height:34px;"></div>
<div class="t fv" style="left:2558px;top:1301px;">1.0</div>
<div class="a" style="left:2637px;top:1294px;width:20px;height:32px;border:1.500px solid #a9a9a9;border-radius:6px;background:linear-gradient(#f4f4f4,#e6e6e6);"></div>
<svg style="left:2637px;top:1294px" width="20" height="32" viewBox="0 0 19 31"><path d="M4.500 12 H14.500 L9.500 5 Z" fill="#8a8a8a"/><path d="M4.500 19 H14.500 L9.500 26 Z" fill="#8a8a8a"/></svg>
<div class="a fld" style="left:2440px;top:1337px;width:191px;height:34px;"></div>
<div class="t fv" style="left:2558px;top:1345px;">0.0</div>
<div class="a" style="left:2637px;top:1338px;width:20px;height:32px;border:1.500px solid #a9a9a9;border-radius:6px;background:linear-gradient(#f4f4f4,#e6e6e6);"></div>
<svg style="left:2637px;top:1338px" width="20" height="32" viewBox="0 0 19 31"><path d="M4.500 12 H14.500 L9.500 5 Z" fill="#8a8a8a"/><path d="M4.500 19 H14.500 L9.500 26 Z" fill="#8a8a8a"/></svg>
<div class="a dv" style="left:2134px;top:1392px;width:538px;"></div>
<div class="a tri" style="left:2142px;top:1406px;"></div>
<div class="t hdr" style="left:2165px;top:1405px;">Edit View</div>
<div class="t fl" style="left:2134px;width:151px;text-align:right;top:1460px;">Text Color</div>
<div class="a" style="left:2292px;top:1454px;width:276px;height:40px;border:1.500px solid #8c8c8c;border-radius:6px;background:#fff;"></div>
<div class="a" style="left:2300px;top:1464px;width:121px;height:20px;border:2px solid #000;background:#fff;"></div>
<svg style="left:2300px;top:1464px" width="121" height="20" viewBox="0 0 121 20"><line x1="2" y1="18" x2="119" y2="2" stroke="#000" stroke-width="1"/></svg>
<div class="t" style="left:2429px;top:1459px;font-size:27.500px;color:#111;letter-spacing:0.1px;">current</div>
<svg style="left:2544px;top:1458px" width="16" height="32" viewBox="0 0 16 32"><path d="M2 12 H14 L8 3.500 Z" fill="#8a8a8a"/><path d="M2 21 H14 L8 29.500 Z" fill="#8a8a8a"/></svg>
<div class="a well" style="left:2579px;top:1451px;width:78px;height:41px;"></div>
<div class="a" style="left:2585px;top:1457px;width:66px;height:30px;border:2.500px solid #7d7d7d;border-radius:6px;background:#fff;"></div>
<div class="t fl" style="left:2134px;width:151px;text-align:right;top:1524px;">Background</div>
<div class="a" style="left:2292px;top:1518px;width:276px;height:40px;border:1.500px solid #8c8c8c;border-radius:6px;background:#fff;"></div>
<div class="a" style="left:2300px;top:1528px;width:121px;height:20px;border:2px solid #000;background:#fff;"></div>
<svg style="left:2300px;top:1528px" width="121" height="20" viewBox="0 0 121 20"><line x1="2" y1="18" x2="119" y2="2" stroke="#000" stroke-width="1"/></svg>
<div class="t" style="left:2429px;top:1523px;font-size:27.500px;color:#111;letter-spacing:0.1px;">current</div>
<svg style="left:2544px;top:1522px" width="16" height="32" viewBox="0 0 16 32"><path d="M2 12 H14 L8 3.500 Z" fill="#8a8a8a"/><path d="M2 21 H14 L8 29.500 Z" fill="#8a8a8a"/></svg>
<div class="a well" style="left:2579px;top:1515px;width:78px;height:41px;"></div>
<div class="a" style="left:2585px;top:1521px;width:66px;height:30px;border:2.500px solid #7d7d7d;border-radius:6px;background:#fff;"></div>
<svg style="left:0;top:0;filter:drop-shadow(0 10px 19px rgba(0,0,0,0.26)) drop-shadow(0 0 1.500px rgba(0,0,0,0.30));" width="2784" height="1686" viewBox="0 0 2784 1686"><path d="M1822 768 H2542 Q2552 768 2552 778 V1053 Q2552 1060 2557.500 1065.500 L2572.500 1080 Q2576 1083.500 2572.500 1087 L2557.500 1101.500 Q2552 1107 2552 1114 V1390 Q2552 1400 2542 1400 H1822 Q1812 1400 1812 1390 V778 Q1812 768 1822 768 Z" fill="#f2f2f2"/></svg>
<div class="a" style="left:1828px;top:794px;width:24px;height:246px;border:2.500px solid #000;background:linear-gradient(#ff1519 0%,#fb4a4e 25%,#f98f93 55%,#f4c3c5 80%,#f1e6e6 100%);"></div>
<div class="a" style="left:1820px;top:786px;width:40px;height:17px;border-radius:9px;border:4px solid #000;background:#fff;"></div>
<div class="a" style="left:1876px;top:786px;width:650px;height:204px;border:2px solid #000;background:linear-gradient(to right,#fbfbfb 0%,#ececec 6%,#d2d2d2 12%,#acacac 20%,#888888 30%,#6b6b6b 40%,#545454 50%,#3d3d3d 60%,#252525 72%,#101010 85%,#000 100%);"><div style="position:absolute;left:0;top:0;right:0;bottom:0;background:linear-gradient(to right,#fdfdfd 0%,#f3e6e7 7.800%,#e2bfc2 17.500%,#d29a9e 27%,#c47479 37%,#b9575d 47%,#bb4046 56.500%,#c22d30 66%,#cf1c1e 76%,#df0e10 86%,#f70a0e 100%);-webkit-mask-image:linear-gradient(to bottom,#000 0%,rgba(0,0,0,0) 100%);mask-image:linear-gradient(to bottom,#000 0%,rgba(0,0,0,0) 100%);"></div></div>
<div class="a" style="left:1858px;top:972px;width:36px;height:36px;border-radius:50%;background:#fff;"></div>
<div class="a" style="left:1862px;top:976px;width:28px;height:28px;border-radius:50%;background:#d5c1bf;border:4.500px solid #000;"></div>
<div class="a" style="left:1876px;top:1016px;width:650px;height:24px;border:2.500px solid #000;background:linear-gradient(to right,#f52a20 0%,#ff5a1f 4%,#ff9b1a 9%,#fff000 15.500%,#a6ff00 23%,#1cf500 32%,#00fb5e 40.500%,#00fff6 50%,#00b4f4 56.500%,#1a78ff 62%,#1010ff 66.500%,#4a0cff 71%,#b400ff 76.500%,#ff00f0 83%,#ff0a96 89.500%,#f01e64 95%,#ff1018 100%);"></div>
<div class="a" style="left:1868px;top:1009px;width:16px;height:39px;border-radius:8px;border:4px solid #000;background:#fff;"></div>
<div class="a" style="left:1873px;top:1059px;width:44px;height:40px;border-radius:8px;background:linear-gradient(#fafafa,#f4f4f4);border:1px solid #e3e3e3;box-shadow:0 0.500px 1px rgba(0,0,0,0.12);"></div>
<svg style="left:1873px;top:1059px" width="44" height="40" viewBox="0 0 44 40"><g fill="none" stroke="#6a6a6a" stroke-width="2" stroke-linecap="round" stroke-linejoin="round"><path d="M11.300 30.800 L12.800 27 L23.500 16.300 L27 19.800 L16.300 30.500 L12.500 32 Z"/><path d="M21 13.800 L29.500 22.300"/><path d="M24.300 15.300 L27.800 11.800 Q30.800 8.800 33.500 11.500 Q36.200 14.200 33.200 17.200 L29.700 20.700"/></g></svg>
<div class="a" style="left:1923px;top:1061px;width:38px;height:38px;border-radius:5px;background:#fff;border:1.500px solid #8d8d8d;"></div>
<div class="a" style="left:1927px;top:1065px;width:30px;height:30px;border-radius:5px;background:#d5c1bf;border:1px solid #b09e9c;"></div>
<div class="a" style="left:1967px;top:1061px;width:106px;height:36px;border:1.500px solid #c3c3c3;background:#f4f4f4;"></div>
<div class="t" style="left:1975px;top:1070px;font-size:22.400px;color:#111;letter-spacing:-0.6px;">D5C1BF</div>
<div class="t" style="left:2020px;top:1105.500px;font-size:21px;color:#333;transform:translateX(-50%);letter-spacing:0.300px;">Hex</div>
<div class="a" style="left:2079px;top:1061px;width:108px;height:36px;border:1.500px solid #c3c3c3;background:#f4f4f4;"></div>
<div class="t" style="left:2087px;top:1070px;font-size:22.400px;color:#111;letter-spacing:0.5px;">0.795</div>
<div class="t" style="left:2133px;top:1105.500px;font-size:21px;color:#333;transform:translateX(-50%);letter-spacing:0.300px;">R</div>
<div class="a" style="left:2193px;top:1061px;width:108px;height:36px;border:1.500px solid #c3c3c3;background:#f4f4f4;"></div>
<div class="t" style="left:2201px;top:1070px;font-size:22.400px;color:#111;letter-spacing:0.5px;">0.704</div>
<div class="t" style="left:2247px;top:1105.500px;font-size:21px;color:#333;transform:translateX(-50%);letter-spacing:0.300px;">G</div>
<div class="a" style="left:2307px;top:1061px;width:108px;height:36px;border:1.500px solid #c3c3c3;background:#f4f4f4;"></div>
<div class="t" style="left:2315px;top:1070px;font-size:22.400px;color:#111;letter-spacing:0.5px;">0.696</div>
<div class="t" style="left:2361px;top:1105.500px;font-size:21px;color:#333;transform:translateX(-50%);letter-spacing:0.300px;">B</div>
<div class="a" style="left:2421px;top:1061px;width:108px;height:36px;border:1.500px solid #c3c3c3;background:#f4f4f4;"></div>
<div class="t" style="left:2429px;top:1070px;font-size:22.400px;color:#111;letter-spacing:0.5px;">1.000</div>
<div class="t" style="left:2475px;top:1105.500px;font-size:21px;color:#333;transform:translateX(-50%);letter-spacing:0.300px;">A</div>
<div class="a" style="left:1871.3px;top:1139.3px;width:34px;height:34px;border-radius:7px;background:#fff;border:5px solid #aaaaaa;"></div>
<svg style="left:1876.3px;top:1144.3px" width="24" height="24" viewBox="0 0 24 24"><line x1="1" y1="23" x2="23" y2="1" stroke="#000" stroke-width="2"/></svg>
<div class="a" style="left:1907.8px;top:1141.8px;width:29px;height:29px;border-radius:6px;background:#ffffff;box-shadow:inset 0 0 0 1px rgba(0,0,0,0.17);"></div>
<div class="a" style="left:1941.8px;top:1141.8px;width:29px;height:29px;border-radius:6px;background:#efefef;box-shadow:inset 0 0 0 1px rgba(0,0,0,0.17);"></div>
<div class="a" style="left:1975.8px;top:1141.8px;width:29px;height:29px;border-radius:6px;background:#e0e0e0;box-shadow:inset 0 0 0 1px rgba(0,0,0,0.17);"></div>
<div class="a" style="left:2009.8px;top:1141.8px;width:29px;height:29px;border-radius:6px;background:#cfcfcf;box-shadow:inset 0 0 0 1px rgba(0,0,0,0.17);"></div>
<div class="a" style="left:2043.8px;top:1141.8px;width:29px;height:29px;border-radius:6px;background:#bcbcbc;box-shadow:inset 0 0 0 1px rgba(0,0,0,0.17);"></div>
<div class="a" style="left:2077.8px;top:1141.8px;width:29px;height:29px;border-radius:6px;background:#a8a8a8;box-shadow:inset 0 0 0 1px rgba(0,0,0,0.17);"></div>
<div class="a" style="left:2111.8px;top:1141.8px;width:29px;height:29px;border-radius:6px;background:#909090;box-shadow:inset 0 0 0 1px rgba(0,0,0,0.17);"></div>
<div class="a" style="left:2145.8px;top:1141.8px;width:29px;height:29px;border-radius:6px;background:#767676;box-shadow:inset 0 0 0 1px rgba(0,0,0,0.17);"></div>
<div class="a" style="left:2179.8px;top:1141.8px;width:29px;height:29px;border-radius:6px;background:#5b5b5b;box-shadow:inset 0 0 0 1px rgba(0,0,0,0.17);"></div>
<div class="a" style="left:2213.8px;top:1141.8px;width:29px;height:29px;border-radius:6px;background:#343836;box-shadow:inset 0 0 0 1px rgba(0,0,0,0.17);"></div>
<div class="a" style="left:2247.8px;top:1141.8px;width:29px;height:29px;border-radius:6px;background:#000000;box-shadow:inset 0 0 0 1px rgba(0,0,0,0.17);"></div>
<div class="a" style="left:2281.8px;top:1141.8px;width:29px;height:29px;border-radius:6px;background:#004b5c;box-shadow:inset 0 0 0 1px rgba(0,0,0,0.17);"></div>
<div class="a" style="left:2315.8px;top:1141.8px;width:29px;height:29px;border-radius:6px;background:#21246f;box-shadow:inset 0 0 0 1px rgba(0,0,0,0.17);"></div>
<div class="a" style="left:2349.8px;top:1141.8px;width:29px;height:29px;border-radius:6px;background:#1f2251;box-shadow:inset 0 0 0 1px rgba(0,0,0,0.17);"></div>
<div class="a" style="left:2383.8px;top:1141.8px;width:29px;height:29px;border-radius:6px;background:#462440;box-shadow:inset 0 0 0 1px rgba(0,0,0,0.17);"></div>
<div class="a" style="left:2417.8px;top:1141.8px;width:29px;height:29px;border-radius:6px;background:#53151d;box-shadow:inset 0 0 0 1px rgba(0,0,0,0.17);"></div>
<div class="a" style="left:2451.8px;top:1141.8px;width:29px;height:29px;border-radius:6px;background:#7a0808;box-shadow:inset 0 0 0 1px rgba(0,0,0,0.17);"></div>
<div class="a" style="left:2485.8px;top:1141.8px;width:29px;height:29px;border-radius:6px;background:#741c12;box-shadow:inset 0 0 0 1px rgba(0,0,0,0.17);"></div>
<div class="a" style="left:1873.8px;top:1175.8px;width:29px;height:29px;border-radius:6px;background:#6b4510;box-shadow:inset 0 0 0 1px rgba(0,0,0,0.17);"></div>
<div class="a" style="left:1907.8px;top:1175.8px;width:29px;height:29px;border-radius:6px;background:#6b4b0e;box-shadow:inset 0 0 0 1px rgba(0,0,0,0.17);"></div>
<div class="a" style="left:1941.8px;top:1175.8px;width:29px;height:29px;border-radius:6px;background:#81812a;box-shadow:inset 0 0 0 1px rgba(0,0,0,0.17);"></div>
<div class="a" style="left:1975.8px;top:1175.8px;width:29px;height:29px;border-radius:6px;background:#5b7b23;box-shadow:inset 0 0 0 1px rgba(0,0,0,0.17);"></div>
<div class="a" style="left:2009.8px;top:1175.8px;width:29px;height:29px;border-radius:6px;background:#394a29;box-shadow:inset 0 0 0 1px rgba(0,0,0,0.17);"></div>
<div class="a" style="left:2043.8px;top:1175.8px;width:29px;height:29px;border-radius:6px;background:#00657a;box-shadow:inset 0 0 0 1px rgba(0,0,0,0.17);"></div>
<div class="a" style="left:2077.8px;top:1175.8px;width:29px;height:29px;border-radius:6px;background:#00488f;box-shadow:inset 0 0 0 1px rgba(0,0,0,0.17);"></div>
<div class="a" style="left:2111.8px;top:1175.8px;width:29px;height:29px;border-radius:6px;background:#21256f;box-shadow:inset 0 0 0 1px rgba(0,0,0,0.17);"></div>
<div class="a" style="left:2145.8px;top:1175.8px;width:29px;height:29px;border-radius:6px;background:#5a1f6b;box-shadow:inset 0 0 0 1px rgba(0,0,0,0.17);"></div>
<div class="a" style="left:2179.8px;top:1175.8px;width:29px;height:29px;border-radius:6px;background:#6b1f2e;box-shadow:inset 0 0 0 1px rgba(0,0,0,0.17);"></div>
<div class="a" style="left:2213.8px;top:1175.8px;width:29px;height:29px;border-radius:6px;background:#9c0e0a;box-shadow:inset 0 0 0 1px rgba(0,0,0,0.17);"></div>
<div class="a" style="left:2247.8px;top:1175.8px;width:29px;height:29px;border-radius:6px;background:#9a2e22;box-shadow:inset 0 0 0 1px rgba(0,0,0,0.17);"></div>
<div class="a" style="left:2281.8px;top:1175.8px;width:29px;height:29px;border-radius:6px;background:#8f6420;box-shadow:inset 0 0 0 1px rgba(0,0,0,0.17);"></div>
<div class="a" style="left:2315.8px;top:1175.8px;width:29px;height:29px;border-radius:6px;background:#8a6a1e;box-shadow:inset 0 0 0 1px rgba(0,0,0,0.17);"></div>
<div class="a" style="left:2349.8px;top:1175.8px;width:29px;height:29px;border-radius:6px;background:#9ba13a;box-shadow:inset 0 0 0 1px rgba(0,0,0,0.17);"></div>
<div class="a" style="left:2383.8px;top:1175.8px;width:29px;height:29px;border-radius:6px;background:#85912e;box-shadow:inset 0 0 0 1px rgba(0,0,0,0.17);"></div>
<div class="a" style="left:2417.8px;top:1175.8px;width:29px;height:29px;border-radius:6px;background:#4b6f2a;box-shadow:inset 0 0 0 1px rgba(0,0,0,0.17);"></div>
<div class="a" style="left:2451.8px;top:1175.8px;width:29px;height:29px;border-radius:6px;background:#0a7a9a;box-shadow:inset 0 0 0 1px rgba(0,0,0,0.17);"></div>
<div class="a" style="left:2485.8px;top:1175.8px;width:29px;height:29px;border-radius:6px;background:#0064c4;box-shadow:inset 0 0 0 1px rgba(0,0,0,0.17);"></div>
<div class="a" style="left:1873.8px;top:1209.8px;width:29px;height:29px;border-radius:6px;background:#3b2a91;box-shadow:inset 0 0 0 1px rgba(0,0,0,0.17);"></div>
<div class="a" style="left:1907.8px;top:1209.8px;width:29px;height:29px;border-radius:6px;background:#7a3090;box-shadow:inset 0 0 0 1px rgba(0,0,0,0.17);"></div>
<div class="a" style="left:1941.8px;top:1209.8px;width:29px;height:29px;border-radius:6px;background:#8a3a59;box-shadow:inset 0 0 0 1px rgba(0,0,0,0.17);"></div>
<div class="a" style="left:1975.8px;top:1209.8px;width:29px;height:29px;border-radius:6px;background:#c6201a;box-shadow:inset 0 0 0 1px rgba(0,0,0,0.17);"></div>
<div class="a" style="left:2009.8px;top:1209.8px;width:29px;height:29px;border-radius:6px;background:#c4521a;box-shadow:inset 0 0 0 1px rgba(0,0,0,0.17);"></div>
<div class="a" style="left:2043.8px;top:1209.8px;width:29px;height:29px;border-radius:6px;background:#c4812a;box-shadow:inset 0 0 0 1px rgba(0,0,0,0.17);"></div>
<div class="a" style="left:2077.8px;top:1209.8px;width:29px;height:29px;border-radius:6px;background:#c49130;box-shadow:inset 0 0 0 1px rgba(0,0,0,0.17);"></div>
<div class="a" style="left:2111.8px;top:1209.8px;width:29px;height:29px;border-radius:6px;background:#c9c140;box-shadow:inset 0 0 0 1px rgba(0,0,0,0.17);"></div>
<div class="a" style="left:2145.8px;top:1209.8px;width:29px;height:29px;border-radius:6px;background:#abb149;box-shadow:inset 0 0 0 1px rgba(0,0,0,0.17);"></div>
<div class="a" style="left:2179.8px;top:1209.8px;width:29px;height:29px;border-radius:6px;background:#5e8a48;box-shadow:inset 0 0 0 1px rgba(0,0,0,0.17);"></div>
<div class="a" style="left:2213.8px;top:1209.8px;width:29px;height:29px;border-radius:6px;background:#00b0d4;box-shadow:inset 0 0 0 1px rgba(0,0,0,0.17);"></div>
<div class="a" style="left:2247.8px;top:1209.8px;width:29px;height:29px;border-radius:6px;background:#0068c8;box-shadow:inset 0 0 0 1px rgba(0,0,0,0.17);"></div>
<div class="a" style="left:2281.8px;top:1209.8px;width:29px;height:29px;border-radius:6px;background:#4a30a0;box-shadow:inset 0 0 0 1px rgba(0,0,0,0.17);"></div>
<div class="a" style="left:2315.8px;top:1209.8px;width:29px;height:29px;border-radius:6px;background:#9a40b0;box-shadow:inset 0 0 0 1px rgba(0,0,0,0.17);"></div>
<div class="a" style="left:2349.8px;top:1209.8px;width:29px;height:29px;border-radius:6px;background:#aa3a6a;box-shadow:inset 0 0 0 1px rgba(0,0,0,0.17);"></div>
<div class="a" style="left:2383.8px;top:1209.8px;width:29px;height:29px;border-radius:6px;background:#f4321a;box-shadow:inset 0 0 0 1px rgba(0,0,0,0.17);"></div>
<div class="a" style="left:2417.8px;top:1209.8px;width:29px;height:29px;border-radius:6px;background:#e46a24;box-shadow:inset 0 0 0 1px rgba(0,0,0,0.17);"></div>
<div class="a" style="left:2451.8px;top:1209.8px;width:29px;height:29px;border-radius:6px;background:#ea9a2a;box-shadow:inset 0 0 0 1px rgba(0,0,0,0.17);"></div>
<div class="a" style="left:2485.8px;top:1209.8px;width:29px;height:29px;border-radius:6px;background:#e8b030;box-shadow:inset 0 0 0 1px rgba(0,0,0,0.17);"></div>
<div class="a" style="left:1873.8px;top:1243.8px;width:29px;height:29px;border-radius:6px;background:#ffe162;box-shadow:inset 0 0 0 1px rgba(0,0,0,0.17);"></div>
<div class="a" style="left:1907.8px;top:1243.8px;width:29px;height:29px;border-radius:6px;background:#d1d559;box-shadow:inset 0 0 0 1px rgba(0,0,0,0.17);"></div>
<div class="a" style="left:1941.8px;top:1243.8px;width:29px;height:29px;border-radius:6px;background:#69b061;box-shadow:inset 0 0 0 1px rgba(0,0,0,0.17);"></div>
<div class="a" style="left:1975.8px;top:1243.8px;width:29px;height:29px;border-radius:6px;background:#00b0d4;box-shadow:inset 0 0 0 1px rgba(0,0,0,0.17);"></div>
<div class="a" style="left:2009.8px;top:1243.8px;width:29px;height:29px;border-radius:6px;background:#007cfc;box-shadow:inset 0 0 0 1px rgba(0,0,0,0.17);"></div>
<div class="a" style="left:2043.8px;top:1243.8px;width:29px;height:29px;border-radius:6px;background:#643cb8;box-shadow:inset 0 0 0 1px rgba(0,0,0,0.17);"></div>
<div class="a" style="left:2077.8px;top:1243.8px;width:29px;height:29px;border-radius:6px;background:#a83cc8;box-shadow:inset 0 0 0 1px rgba(0,0,0,0.17);"></div>
<div class="a" style="left:2111.8px;top:1243.8px;width:29px;height:29px;border-radius:6px;background:#d04470;box-shadow:inset 0 0 0 1px rgba(0,0,0,0.17);"></div>
<div class="a" style="left:2145.8px;top:1243.8px;width:29px;height:29px;border-radius:6px;background:#fc5028;box-shadow:inset 0 0 0 1px rgba(0,0,0,0.17);"></div>
<div class="a" style="left:2179.8px;top:1243.8px;width:29px;height:29px;border-radius:6px;background:#fc7c28;box-shadow:inset 0 0 0 1px rgba(0,0,0,0.17);"></div>
<div class="a" style="left:2213.8px;top:1243.8px;width:29px;height:29px;border-radius:6px;background:#f8b850;box-shadow:inset 0 0 0 1px rgba(0,0,0,0.17);"></div>
<div class="a" style="left:2247.8px;top:1243.8px;width:29px;height:29px;border-radius:6px;background:#fcc850;box-shadow:inset 0 0 0 1px rgba(0,0,0,0.17);"></div>
<div class="a" style="left:2281.8px;top:1243.8px;width:29px;height:29px;border-radius:6px;background:#f4f081;box-shadow:inset 0 0 0 1px rgba(0,0,0,0.17);"></div>
<div class="a" style="left:2315.8px;top:1243.8px;width:29px;height:29px;border-radius:6px;background:#e5e971;box-shadow:inset 0 0 0 1px rgba(0,0,0,0.17);"></div>
<div class="a" style="left:2349.8px;top:1243.8px;width:29px;height:29px;border-radius:6px;background:#81b861;box-shadow:inset 0 0 0 1px rgba(0,0,0,0.17);"></div>
<div class="a" style="left:2383.8px;top:1243.8px;width:29px;height:29px;border-radius:6px;background:#00ccfc;box-shadow:inset 0 0 0 1px rgba(0,0,0,0.17);"></div>
<div class="a" style="left:2417.8px;top:1243.8px;width:29px;height:29px;border-radius:6px;background:#38a0fc;box-shadow:inset 0 0 0 1px rgba(0,0,0,0.17);"></div>
<div class="a" style="left:2451.8px;top:1243.8px;width:29px;height:29px;border-radius:6px;background:#7458e8;box-shadow:inset 0 0 0 1px rgba(0,0,0,0.17);"></div>
<div class="a" style="left:2485.8px;top:1243.8px;width:29px;height:29px;border-radius:6px;background:#cc58fc;box-shadow:inset 0 0 0 1px rgba(0,0,0,0.17);"></div>
<div class="a" style="left:1873.8px;top:1277.8px;width:29px;height:29px;border-radius:6px;background:#f0588c;box-shadow:inset 0 0 0 1px rgba(0,0,0,0.17);"></div>
<div class="a" style="left:1907.8px;top:1277.8px;width:29px;height:29px;border-radius:6px;background:#fc8071;box-shadow:inset 0 0 0 1px rgba(0,0,0,0.17);"></div>
<div class="a" style="left:1941.8px;top:1277.8px;width:29px;height:29px;border-radius:6px;background:#fc9061;box-shadow:inset 0 0 0 1px rgba(0,0,0,0.17);"></div>
<div class="a" style="left:1975.8px;top:1277.8px;width:29px;height:29px;border-radius:6px;background:#fcb859;box-shadow:inset 0 0 0 1px rgba(0,0,0,0.17);"></div>
<div class="a" style="left:2009.8px;top:1277.8px;width:29px;height:29px;border-radius:6px;background:#fcd469;box-shadow:inset 0 0 0 1px rgba(0,0,0,0.17);"></div>
<div class="a" style="left:2043.8px;top:1277.8px;width:29px;height:29px;border-radius:6px;background:#f4f081;box-shadow:inset 0 0 0 1px rgba(0,0,0,0.17);"></div>
<div class="a" style="left:2077.8px;top:1277.8px;width:29px;height:29px;border-radius:6px;background:#e9f089;box-shadow:inset 0 0 0 1px rgba(0,0,0,0.17);"></div>
<div class="a" style="left:2111.8px;top:1277.8px;width:29px;height:29px;border-radius:6px;background:#a9d881;box-shadow:inset 0 0 0 1px rgba(0,0,0,0.17);"></div>
<div class="a" style="left:2145.8px;top:1277.8px;width:29px;height:29px;border-radius:6px;background:#51dcf8;box-shadow:inset 0 0 0 1px rgba(0,0,0,0.17);"></div>
<div class="a" style="left:2179.8px;top:1277.8px;width:29px;height:29px;border-radius:6px;background:#81c0fc;box-shadow:inset 0 0 0 1px rgba(0,0,0,0.17);"></div>
<div class="a" style="left:2213.8px;top:1277.8px;width:29px;height:29px;border-radius:6px;background:#9878fc;box-shadow:inset 0 0 0 1px rgba(0,0,0,0.17);"></div>
<div class="a" style="left:2247.8px;top:1277.8px;width:29px;height:29px;border-radius:6px;background:#d868fc;box-shadow:inset 0 0 0 1px rgba(0,0,0,0.17);"></div>
<div class="a" style="left:2281.8px;top:1277.8px;width:29px;height:29px;border-radius:6px;background:#f890a8;box-shadow:inset 0 0 0 1px rgba(0,0,0,0.17);"></div>
<div class="a" style="left:2315.8px;top:1277.8px;width:29px;height:29px;border-radius:6px;background:#fca098;box-shadow:inset 0 0 0 1px rgba(0,0,0,0.17);"></div>
<div class="a" style="left:2349.8px;top:1277.8px;width:29px;height:29px;border-radius:6px;background:#fca890;box-shadow:inset 0 0 0 1px rgba(0,0,0,0.17);"></div>
<div class="a" style="left:2383.8px;top:1277.8px;width:29px;height:29px;border-radius:6px;background:#fcc890;box-shadow:inset 0 0 0 1px rgba(0,0,0,0.17);"></div>
<div class="a" style="left:2417.8px;top:1277.8px;width:29px;height:29px;border-radius:6px;background:#fcd498;box-shadow:inset 0 0 0 1px rgba(0,0,0,0.17);"></div>
<div class="a" style="left:2451.8px;top:1277.8px;width:29px;height:29px;border-radius:6px;background:#faecb4;box-shadow:inset 0 0 0 1px rgba(0,0,0,0.17);"></div>
<div class="a" style="left:2485.8px;top:1277.8px;width:29px;height:29px;border-radius:6px;background:#f4f0b0;box-shadow:inset 0 0 0 1px rgba(0,0,0,0.17);"></div>
<div class="a" style="left:1873.8px;top:1311.8px;width:29px;height:29px;border-radius:6px;background:#b9dca1;box-shadow:inset 0 0 0 1px rgba(0,0,0,0.17);"></div>
<div class="a" style="left:1907.8px;top:1311.8px;width:29px;height:29px;border-radius:6px;background:#a9dcfc;box-shadow:inset 0 0 0 1px rgba(0,0,0,0.17);"></div>
<div class="a" style="left:1941.8px;top:1311.8px;width:29px;height:29px;border-radius:6px;background:#b1d4fc;box-shadow:inset 0 0 0 1px rgba(0,0,0,0.17);"></div>
<div class="a" style="left:1975.8px;top:1311.8px;width:29px;height:29px;border-radius:6px;background:#c0a8f4;box-shadow:inset 0 0 0 1px rgba(0,0,0,0.17);"></div>
<div class="a" style="left:2009.8px;top:1311.8px;width:29px;height:29px;border-radius:6px;background:#e8b0e8;box-shadow:inset 0 0 0 1px rgba(0,0,0,0.17);"></div>
<div class="a" style="left:2043.8px;top:1311.8px;width:29px;height:29px;border-radius:6px;background:#f8b8c9;box-shadow:inset 0 0 0 1px rgba(0,0,0,0.17);"></div>
<div class="a" style="left:2077.8px;top:1311.8px;width:29px;height:29px;border-radius:6px;background:#fcc0c0;box-shadow:inset 0 0 0 1px rgba(0,0,0,0.17);"></div>
<div class="a" style="left:2111.8px;top:1311.8px;width:29px;height:29px;border-radius:6px;background:#fcc8c0;box-shadow:inset 0 0 0 1px rgba(0,0,0,0.17);"></div>
<div class="a" style="left:2145.8px;top:1311.8px;width:29px;height:29px;border-radius:6px;background:#fcdcc0;box-shadow:inset 0 0 0 1px rgba(0,0,0,0.17);"></div>
<div class="a" style="left:2179.8px;top:1311.8px;width:29px;height:29px;border-radius:6px;background:#faecb9;box-shadow:inset 0 0 0 1px rgba(0,0,0,0.17);"></div>
<div class="a" style="left:2213.8px;top:1311.8px;width:29px;height:29px;border-radius:6px;background:#fcf8d5;box-shadow:inset 0 0 0 1px rgba(0,0,0,0.17);"></div>
<div class="a" style="left:2247.8px;top:1311.8px;width:29px;height:29px;border-radius:6px;background:#fafad1;box-shadow:inset 0 0 0 1px rgba(0,0,0,0.17);"></div>
<div class="a" style="left:2281.8px;top:1311.8px;width:29px;height:29px;border-radius:6px;background:#e1ecd9;box-shadow:inset 0 0 0 1px rgba(0,0,0,0.17);"></div>
<div class="a" style="left:2315.8px;top:1311.8px;width:29px;height:29px;border-radius:6px;background:#d9ecfc;box-shadow:inset 0 0 0 1px rgba(0,0,0,0.17);"></div>
<div class="a" style="left:2349.8px;top:1311.8px;width:29px;height:29px;border-radius:6px;background:#d9e4fc;box-shadow:inset 0 0 0 1px rgba(0,0,0,0.17);"></div>
<div class="a" style="left:2383.8px;top:1311.8px;width:29px;height:29px;border-radius:6px;background:#dcd4f4;box-shadow:inset 0 0 0 1px rgba(0,0,0,0.17);"></div>
<div class="a" style="left:2417.8px;top:1311.8px;width:29px;height:29px;border-radius:6px;background:#f0dcf8;box-shadow:inset 0 0 0 1px rgba(0,0,0,0.17);"></div>
<div class="a" style="left:2451.8px;top:1311.8px;width:29px;height:29px;border-radius:6px;background:#fce0e4;box-shadow:inset 0 0 0 1px rgba(0,0,0,0.17);"></div>
<div class="a" style="left:2485.8px;top:1311.8px;width:29px;height:29px;border-radius:6px;background:#fce4e4;box-shadow:inset 0 0 0 1px rgba(0,0,0,0.17);"></div>
<div class="a" style="left:1873.8px;top:1345.8px;width:29px;height:29px;border-radius:6px;background:#fce4dd;box-shadow:inset 0 0 0 1px rgba(0,0,0,0.17);"></div>
<div class="a" style="left:1907.8px;top:1345.8px;width:29px;height:29px;border-radius:6px;background:#fc4031;box-shadow:inset 0 0 0 1px rgba(0,0,0,0.17);"></div>
<div class="a" style="left:1941.8px;top:1345.8px;width:29px;height:29px;border-radius:6px;background:#ec1c64;box-shadow:inset 0 0 0 1px rgba(0,0,0,0.17);"></div>
<div class="a" style="left:1975.8px;top:1345.8px;width:29px;height:29px;border-radius:6px;background:#9c28b0;box-shadow:inset 0 0 0 1px rgba(0,0,0,0.17);"></div>
<div class="a" style="left:2009.8px;top:1345.8px;width:29px;height:29px;border-radius:6px;background:#6438b8;box-shadow:inset 0 0 0 1px rgba(0,0,0,0.17);"></div>
<div class="a" style="left:2043.8px;top:1345.8px;width:29px;height:29px;border-radius:6px;background:#3c50b0;box-shadow:inset 0 0 0 1px rgba(0,0,0,0.17);"></div>
<div class="a" style="left:2077.8px;top:1345.8px;width:29px;height:29px;border-radius:6px;background:#2094f0;box-shadow:inset 0 0 0 1px rgba(0,0,0,0.17);"></div>
<div class="a" style="left:2111.8px;top:1345.8px;width:29px;height:29px;border-radius:6px;background:#04a8f4;box-shadow:inset 0 0 0 1px rgba(0,0,0,0.17);"></div>
<div class="a" style="left:2145.8px;top:1345.8px;width:29px;height:29px;border-radius:6px;background:#00b0d4;box-shadow:inset 0 0 0 1px rgba(0,0,0,0.17);"></div>
<div class="a" style="left:2179.8px;top:1345.8px;width:29px;height:29px;border-radius:6px;background:#009888;box-shadow:inset 0 0 0 1px rgba(0,0,0,0.17);"></div>
<div class="a" style="left:2213.8px;top:1345.8px;width:29px;height:29px;border-radius:6px;background:#4caf50;box-shadow:inset 0 0 0 1px rgba(0,0,0,0.17);"></div>
<div class="a" style="left:2247.8px;top:1345.8px;width:29px;height:29px;border-radius:6px;background:#8bc34a;box-shadow:inset 0 0 0 1px rgba(0,0,0,0.17);"></div>
<div class="a" style="left:2281.8px;top:1345.8px;width:29px;height:29px;border-radius:6px;background:#c8dc38;box-shadow:inset 0 0 0 1px rgba(0,0,0,0.17);"></div>
<div class="a" style="left:2315.8px;top:1345.8px;width:29px;height:29px;border-radius:6px;background:#fce838;box-shadow:inset 0 0 0 1px rgba(0,0,0,0.17);"></div>
<div class="a" style="left:2349.8px;top:1345.8px;width:29px;height:29px;border-radius:6px;background:#fcc010;box-shadow:inset 0 0 0 1px rgba(0,0,0,0.17);"></div>
<div class="a" style="left:2383.8px;top:1345.8px;width:29px;height:29px;border-radius:6px;background:#fc8c18;box-shadow:inset 0 0 0 1px rgba(0,0,0,0.17);"></div>
<div class="a" style="left:2417.8px;top:1345.8px;width:29px;height:29px;border-radius:6px;background:#fc5420;box-shadow:inset 0 0 0 1px rgba(0,0,0,0.17);"></div>
<div class="a" style="left:2451.8px;top:1345.8px;width:29px;height:29px;border-radius:6px;background:#785048;box-shadow:inset 0 0 0 1px rgba(0,0,0,0.17);"></div>
<div class="a" style="left:2485.8px;top:1345.8px;width:29px;height:29px;border-radius:6px;background:#587890;box-shadow:inset 0 0 0 1px rgba(0,0,0,0.17);"></div>
</div></div>
</body></html>
